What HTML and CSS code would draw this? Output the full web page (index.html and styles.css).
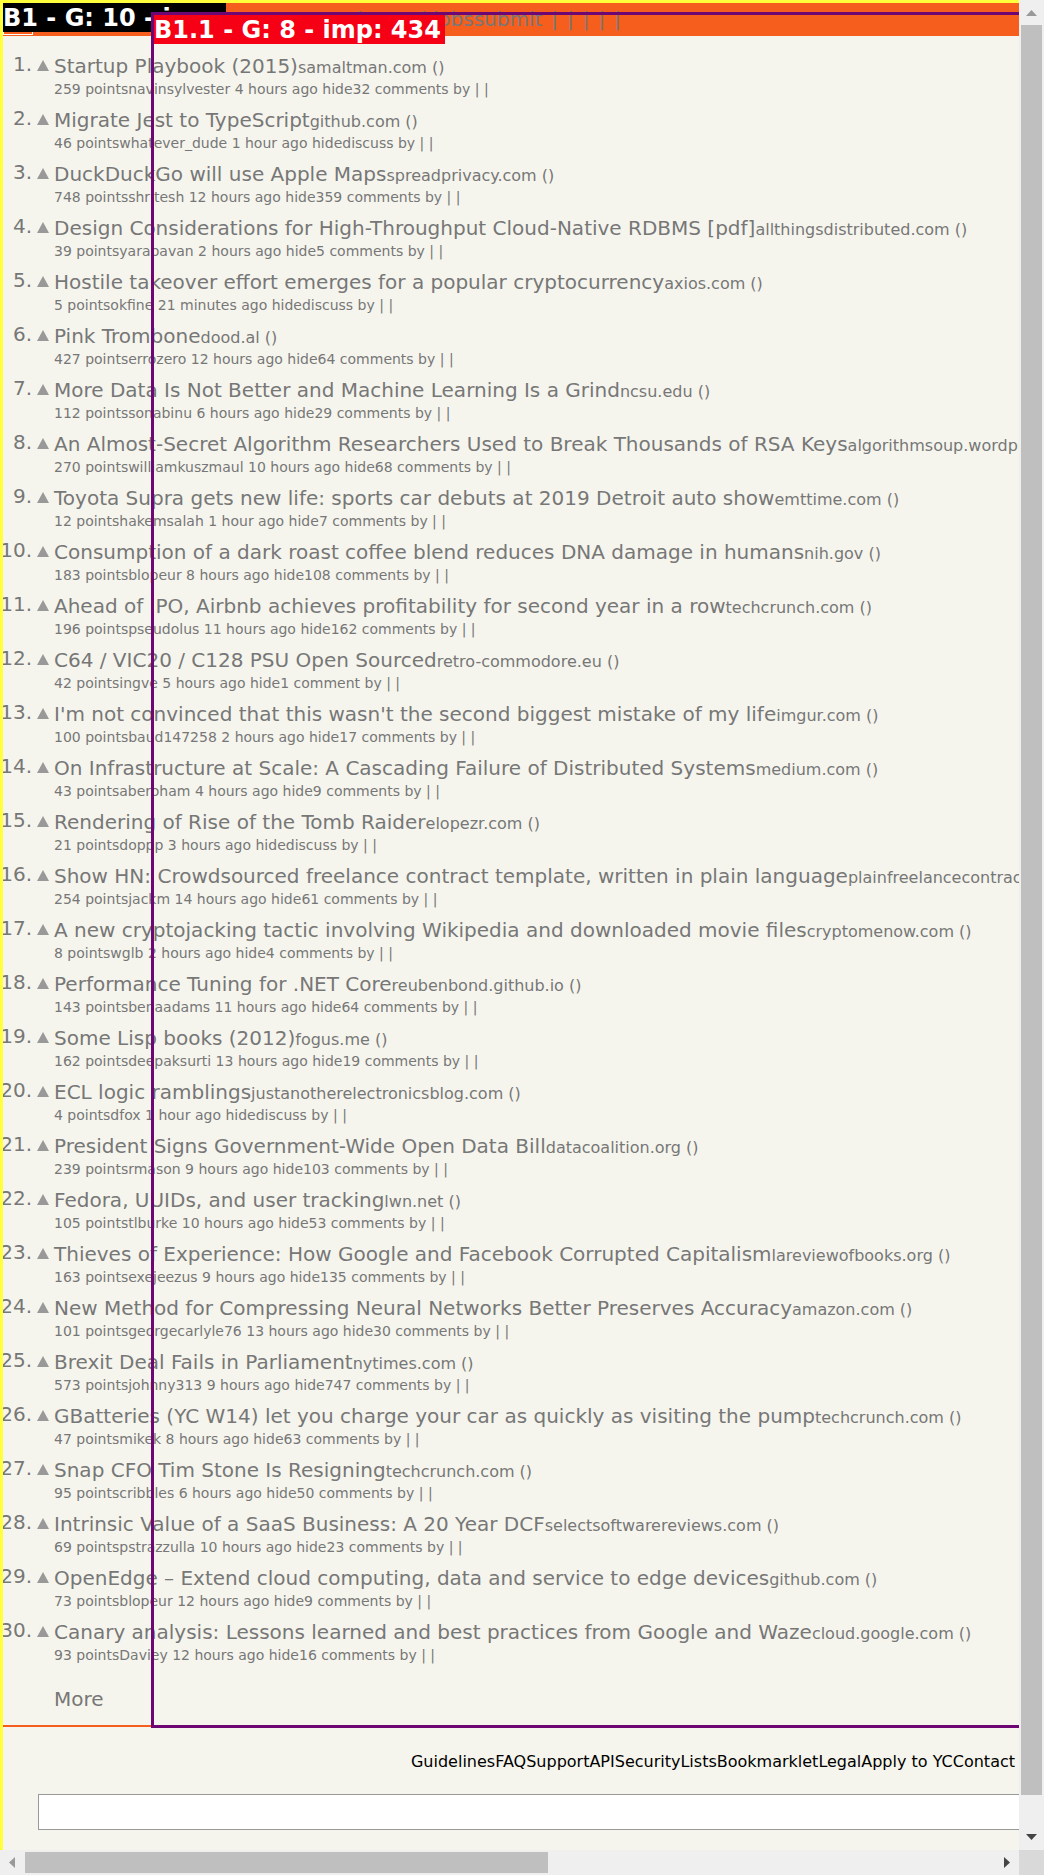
FILE: index.html
```html
<!DOCTYPE html>
<html lang="en">
<head>
<meta charset="utf-8">
<meta name="viewport" content="width=device-width, initial-scale=1">
<title>Hacker News</title>
<link rel="stylesheet" href="styles.css">
</head>
<body>
<svg width="0" height="0" class="defs" aria-hidden="true"><symbol id="up" viewBox="0 0 12 11"><path d="M6 0 12 11H0Z" fill="#999"/></symbol></svg>
<div class="window">
<div class="page">
<div class="content">
<header class="bar"><span class="logo"></span><nav class="nav"><a href="#">new</a><a href="#">comments</a><a href="#">show</a><a href="#">ask</a><a href="#">jobs</a><a href="#">submit</a><span class="bars"><i>|</i><i>|</i><i>|</i><i>|</i><i>|</i></span></nav></header>
<ol class="stories">
<li class="story"><span class="rank">1.</span><button class="vote" aria-label="upvote"><svg><use href="#up"/></svg></button><div class="title"><a href="#">Startup Playbook (2015)</a><a href="#" class="site">samaltman.com ()</a></div><div class="meta">259 points<a href="#">navinsylvester</a> 4 hours ago <a href="#">hide</a><a href="#">32 comments</a> by | |</div></li>
<li class="story"><span class="rank">2.</span><button class="vote" aria-label="upvote"><svg><use href="#up"/></svg></button><div class="title"><a href="#">Migrate Jest to TypeScript</a><a href="#" class="site">github.com ()</a></div><div class="meta">46 points<a href="#">whatever_dude</a> 1 hour ago <a href="#">hide</a><a href="#">discuss</a> by | |</div></li>
<li class="story"><span class="rank">3.</span><button class="vote" aria-label="upvote"><svg><use href="#up"/></svg></button><div class="title"><a href="#">DuckDuckGo will use Apple Maps</a><a href="#" class="site">spreadprivacy.com ()</a></div><div class="meta">748 points<a href="#">shritesh</a> 12 hours ago <a href="#">hide</a><a href="#">359 comments</a> by | |</div></li>
<li class="story"><span class="rank">4.</span><button class="vote" aria-label="upvote"><svg><use href="#up"/></svg></button><div class="title"><a href="#">Design Considerations for High-Throughput Cloud-Native RDBMS [pdf]</a><a href="#" class="site">allthingsdistributed.com ()</a></div><div class="meta">39 points<a href="#">yarapavan</a> 2 hours ago <a href="#">hide</a><a href="#">5 comments</a> by | |</div></li>
<li class="story"><span class="rank">5.</span><button class="vote" aria-label="upvote"><svg><use href="#up"/></svg></button><div class="title"><a href="#">Hostile takeover effort emerges for a popular cryptocurrency</a><a href="#" class="site">axios.com ()</a></div><div class="meta">5 points<a href="#">okfine</a> 21 minutes ago <a href="#">hide</a><a href="#">discuss</a> by | |</div></li>
<li class="story"><span class="rank">6.</span><button class="vote" aria-label="upvote"><svg><use href="#up"/></svg></button><div class="title"><a href="#">Pink Trombone</a><a href="#" class="site">dood.al ()</a></div><div class="meta">427 points<a href="#">errozero</a> 12 hours ago <a href="#">hide</a><a href="#">64 comments</a> by | |</div></li>
<li class="story"><span class="rank">7.</span><button class="vote" aria-label="upvote"><svg><use href="#up"/></svg></button><div class="title"><a href="#">More Data Is Not Better and Machine Learning Is a Grind</a><a href="#" class="site">ncsu.edu ()</a></div><div class="meta">112 points<a href="#">sonabinu</a> 6 hours ago <a href="#">hide</a><a href="#">29 comments</a> by | |</div></li>
<li class="story"><span class="rank">8.</span><button class="vote" aria-label="upvote"><svg><use href="#up"/></svg></button><div class="title"><a href="#">An Almost-Secret Algorithm Researchers Used to Break Thousands of RSA Keys</a><a href="#" class="site">algorithmsoup.wordpress.com ()</a></div><div class="meta">270 points<a href="#">williamkuszmaul</a> 10 hours ago <a href="#">hide</a><a href="#">68 comments</a> by | |</div></li>
<li class="story"><span class="rank">9.</span><button class="vote" aria-label="upvote"><svg><use href="#up"/></svg></button><div class="title"><a href="#">Toyota Supra gets new life: sports car debuts at 2019 Detroit auto show</a><a href="#" class="site">emttime.com ()</a></div><div class="meta">12 points<a href="#">hakemsalah</a> 1 hour ago <a href="#">hide</a><a href="#">7 comments</a> by | |</div></li>
<li class="story"><span class="rank">10.</span><button class="vote" aria-label="upvote"><svg><use href="#up"/></svg></button><div class="title"><a href="#">Consumption of a dark roast coffee blend reduces DNA damage in humans</a><a href="#" class="site">nih.gov ()</a></div><div class="meta">183 points<a href="#">blopeur</a> 8 hours ago <a href="#">hide</a><a href="#">108 comments</a> by | |</div></li>
<li class="story"><span class="rank">11.</span><button class="vote" aria-label="upvote"><svg><use href="#up"/></svg></button><div class="title"><a href="#">Ahead of IPO, Airbnb achieves profitability for second year in a row</a><a href="#" class="site">techcrunch.com ()</a></div><div class="meta">196 points<a href="#">pseudolus</a> 11 hours ago <a href="#">hide</a><a href="#">162 comments</a> by | |</div></li>
<li class="story"><span class="rank">12.</span><button class="vote" aria-label="upvote"><svg><use href="#up"/></svg></button><div class="title"><a href="#">C64 / VIC20 / C128 PSU Open Sourced</a><a href="#" class="site">retro-commodore.eu ()</a></div><div class="meta">42 points<a href="#">ingve</a> 5 hours ago <a href="#">hide</a><a href="#">1 comment</a> by | |</div></li>
<li class="story"><span class="rank">13.</span><button class="vote" aria-label="upvote"><svg><use href="#up"/></svg></button><div class="title"><a href="#">I'm not convinced that this wasn't the second biggest mistake of my life</a><a href="#" class="site">imgur.com ()</a></div><div class="meta">100 points<a href="#">baud147258</a> 2 hours ago <a href="#">hide</a><a href="#">17 comments</a> by | |</div></li>
<li class="story"><span class="rank">14.</span><button class="vote" aria-label="upvote"><svg><use href="#up"/></svg></button><div class="title"><a href="#">On Infrastructure at Scale: A Cascading Failure of Distributed Systems</a><a href="#" class="site">medium.com ()</a></div><div class="meta">43 points<a href="#">aberoham</a> 4 hours ago <a href="#">hide</a><a href="#">9 comments</a> by | |</div></li>
<li class="story"><span class="rank">15.</span><button class="vote" aria-label="upvote"><svg><use href="#up"/></svg></button><div class="title"><a href="#">Rendering of Rise of the Tomb Raider</a><a href="#" class="site">elopezr.com ()</a></div><div class="meta">21 points<a href="#">doppp</a> 3 hours ago <a href="#">hide</a><a href="#">discuss</a> by | |</div></li>
<li class="story"><span class="rank">16.</span><button class="vote" aria-label="upvote"><svg><use href="#up"/></svg></button><div class="title"><a href="#">Show HN: Crowdsourced freelance contract template, written in plain language</a><a href="#" class="site">plainfreelancecontract.com ()</a></div><div class="meta">254 points<a href="#">jackm</a> 14 hours ago <a href="#">hide</a><a href="#">61 comments</a> by | |</div></li>
<li class="story"><span class="rank">17.</span><button class="vote" aria-label="upvote"><svg><use href="#up"/></svg></button><div class="title"><a href="#">A new cryptojacking tactic involving Wikipedia and downloaded movie files</a><a href="#" class="site">cryptomenow.com ()</a></div><div class="meta">8 points<a href="#">wglb</a> 2 hours ago <a href="#">hide</a><a href="#">4 comments</a> by | |</div></li>
<li class="story"><span class="rank">18.</span><button class="vote" aria-label="upvote"><svg><use href="#up"/></svg></button><div class="title"><a href="#">Performance Tuning for .NET Core</a><a href="#" class="site">reubenbond.github.io ()</a></div><div class="meta">143 points<a href="#">benaadams</a> 11 hours ago <a href="#">hide</a><a href="#">64 comments</a> by | |</div></li>
<li class="story"><span class="rank">19.</span><button class="vote" aria-label="upvote"><svg><use href="#up"/></svg></button><div class="title"><a href="#">Some Lisp books (2012)</a><a href="#" class="site">fogus.me ()</a></div><div class="meta">162 points<a href="#">deepaksurti</a> 13 hours ago <a href="#">hide</a><a href="#">19 comments</a> by | |</div></li>
<li class="story"><span class="rank">20.</span><button class="vote" aria-label="upvote"><svg><use href="#up"/></svg></button><div class="title"><a href="#">ECL logic ramblings</a><a href="#" class="site">justanotherelectronicsblog.com ()</a></div><div class="meta">4 points<a href="#">dfox</a> 1 hour ago <a href="#">hide</a><a href="#">discuss</a> by | |</div></li>
<li class="story"><span class="rank">21.</span><button class="vote" aria-label="upvote"><svg><use href="#up"/></svg></button><div class="title"><a href="#">President Signs Government-Wide Open Data Bill</a><a href="#" class="site">datacoalition.org ()</a></div><div class="meta">239 points<a href="#">rmason</a> 9 hours ago <a href="#">hide</a><a href="#">103 comments</a> by | |</div></li>
<li class="story"><span class="rank">22.</span><button class="vote" aria-label="upvote"><svg><use href="#up"/></svg></button><div class="title"><a href="#">Fedora, UUIDs, and user tracking</a><a href="#" class="site">lwn.net ()</a></div><div class="meta">105 points<a href="#">tlburke</a> 10 hours ago <a href="#">hide</a><a href="#">53 comments</a> by | |</div></li>
<li class="story"><span class="rank">23.</span><button class="vote" aria-label="upvote"><svg><use href="#up"/></svg></button><div class="title"><a href="#">Thieves of Experience: How Google and Facebook Corrupted Capitalism</a><a href="#" class="site">lareviewofbooks.org ()</a></div><div class="meta">163 points<a href="#">exejeezus</a> 9 hours ago <a href="#">hide</a><a href="#">135 comments</a> by | |</div></li>
<li class="story"><span class="rank">24.</span><button class="vote" aria-label="upvote"><svg><use href="#up"/></svg></button><div class="title"><a href="#">New Method for Compressing Neural Networks Better Preserves Accuracy</a><a href="#" class="site">amazon.com ()</a></div><div class="meta">101 points<a href="#">georgecarlyle76</a> 13 hours ago <a href="#">hide</a><a href="#">30 comments</a> by | |</div></li>
<li class="story"><span class="rank">25.</span><button class="vote" aria-label="upvote"><svg><use href="#up"/></svg></button><div class="title"><a href="#">Brexit Deal Fails in Parliament</a><a href="#" class="site">nytimes.com ()</a></div><div class="meta">573 points<a href="#">johnny313</a> 9 hours ago <a href="#">hide</a><a href="#">747 comments</a> by | |</div></li>
<li class="story"><span class="rank">26.</span><button class="vote" aria-label="upvote"><svg><use href="#up"/></svg></button><div class="title"><a href="#">GBatteries (YC W14) let you charge your car as quickly as visiting the pump</a><a href="#" class="site">techcrunch.com ()</a></div><div class="meta">47 points<a href="#">mikek</a> 8 hours ago <a href="#">hide</a><a href="#">63 comments</a> by | |</div></li>
<li class="story"><span class="rank">27.</span><button class="vote" aria-label="upvote"><svg><use href="#up"/></svg></button><div class="title"><a href="#">Snap CFO Tim Stone Is Resigning</a><a href="#" class="site">techcrunch.com ()</a></div><div class="meta">95 points<a href="#">cribbles</a> 6 hours ago <a href="#">hide</a><a href="#">50 comments</a> by | |</div></li>
<li class="story"><span class="rank">28.</span><button class="vote" aria-label="upvote"><svg><use href="#up"/></svg></button><div class="title"><a href="#">Intrinsic Value of a SaaS Business: A 20 Year DCF</a><a href="#" class="site">selectsoftwarereviews.com ()</a></div><div class="meta">69 points<a href="#">pstrazzulla</a> 10 hours ago <a href="#">hide</a><a href="#">23 comments</a> by | |</div></li>
<li class="story"><span class="rank">29.</span><button class="vote" aria-label="upvote"><svg><use href="#up"/></svg></button><div class="title"><a href="#">OpenEdge – Extend cloud computing, data and service to edge devices</a><a href="#" class="site">github.com ()</a></div><div class="meta">73 points<a href="#">blopeur</a> 12 hours ago <a href="#">hide</a><a href="#">9 comments</a> by | |</div></li>
<li class="story"><span class="rank">30.</span><button class="vote" aria-label="upvote"><svg><use href="#up"/></svg></button><div class="title"><a href="#">Canary analysis: Lessons learned and best practices from Google and Waze</a><a href="#" class="site">cloud.google.com ()</a></div><div class="meta">93 points<a href="#">Daviey</a> 12 hours ago <a href="#">hide</a><a href="#">16 comments</a> by | |</div></li>
</ol>
<a href="#" class="more">More</a>
<div class="outer-label">B1 - G: 10 - imp:</div>
<div class="block"><div class="block-label">B1.1 - G: 8 - imp: 434</div></div>
</div>
<footer class="footer">
<nav class="links"><a href="#">Guidelines</a><a href="#">FAQ</a><a href="#">Support</a><a href="#">API</a><a href="#">Security</a><a href="#">Lists</a><a href="#">Bookmarklet</a><a href="#">Legal</a><a href="#">Apply to YC</a><a href="#">Contact</a></nav>
<form class="search"><input type="text" class="query" aria-label="Search"></form>
</footer>
</div>
<div class="scroll vertical"><svg class="arrow" viewBox="0 0 25 25"><path d="M12.500 10 18 16H7Z" fill="#999"/></svg><div class="track"><div class="thumb"></div></div><svg class="arrow" viewBox="0 0 25 25"><path d="M7 9H18L12.500 15Z" fill="#444"/></svg></div>
<div class="scroll horizontal"><svg class="arrow" viewBox="0 0 25 25"><path d="M15 7V18L9 12.500Z" fill="#999"/></svg><div class="track"><div class="thumb"></div></div><svg class="arrow" viewBox="0 0 25 25"><path d="M10 7V18L16 12.500Z" fill="#444"/></svg></div>
<div class="corner"></div>
</div>
</body>
</html>
```
FILE: styles.css
```css
* { box-sizing: border-box; }

body {
  margin: 0;
  font-family: "DejaVu Sans", sans-serif;
  color: #777;
  background: #f5f5ed;
}

a { color: inherit; text-decoration: none; }

.defs { position: absolute; }

.window {
  display: grid;
  grid-template-columns: minmax(0, 1fr) 25px;
  grid-template-rows: 1fr 25px;
  min-height: 100vh;
}

.page {
  position: relative;
  overflow: hidden;
  padding-top: 3px;
  white-space: nowrap;
}

.page::after {
  content: "";
  position: absolute;
  inset: 0 -3px -3px 0;
  border: 3px solid #ffff3c;
  pointer-events: none;
}

.content {
  position: relative;
  border-bottom: 2px solid #f65e1e;
}

.bar {
  display: flex;
  align-items: center;
  height: 33px;
  background: #f65e1e;
}

.logo {
  width: 30px;
  height: 30px;
  margin-left: 3px;
  border: 1px solid #fff;
}

.nav {
  display: flex;
  margin-left: 167px;
  padding-bottom: 2px;
  font-size: 20px;
  line-height: 24px;
}

.bars {
  display: flex;
  gap: 9px;
  padding-left: 9px;
}

.bars i { font-style: normal; }

.stories {
  margin: 0;
  padding: 14px 0 0;
  list-style: none;
}

.story {
  display: grid;
  grid-template-columns: 32px 22px 1fr;
  grid-template-rows: 30px 24px;
}

.rank {
  justify-self: end;
  font-size: 20px;
  line-height: 28px;
}

.vote {
  display: flex;
  height: 30px;
  padding: 10px 5px;
  border: 0;
  background: none;
}

.vote svg { width: 12px; height: 11px; flex: none; }

.title { font-size: 20px; line-height: 32px; }

.site { font-size: 16px; }

.meta {
  grid-column: 3;
  font-size: 14px;
  line-height: 18px;
}

.more {
  display: block;
  padding: 14px 0 11px 54px;
  font-size: 20px;
  line-height: 30px;
}

.outer-label,
.block-label {
  width: max-content;
  height: 29px;
  padding-right: 4px;
  font-size: 24px;
  font-weight: bold;
  line-height: 31px;
  color: #fff;
}

.outer-label {
  position: absolute;
  top: 0;
  left: 3px;
  background: #000;
}

.block {
  position: absolute;
  inset: 9px -3px -3px 151px;
  border: 3px solid #6e0773;
}

.block-label { background: #f50014; }

.links {
  display: flex;
  justify-content: flex-end;
  padding: 24px 4px 22px 0;
  font-size: 16px;
  line-height: 21px;
  color: #000;
}

.search { padding: 0 0 20px 38px; }

.query {
  display: block;
  width: calc(100% + 8px);
  height: 36px;
  border: 1px solid #999;
  background: #fff;
}

.scroll { display: flex; background: #efefef; }

.vertical { flex-direction: column; }

.arrow { flex: none; width: 25px; height: 25px; }

.track { flex: 1; padding: 0 2px; }

.vertical .thumb { height: calc(100% - 30px); }

.thumb { background: #bfbfbf; }

.horizontal .track { padding: 2px 0; }

.horizontal .thumb { width: 54%; height: 100%; }

.corner { background: #d9d9d9; }
```
